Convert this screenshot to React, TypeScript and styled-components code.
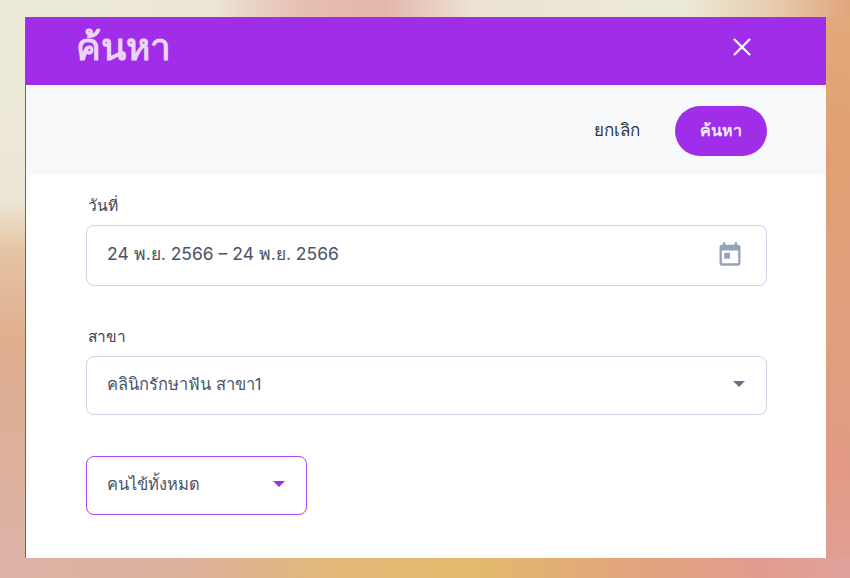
import React from "react";
import styled, { createGlobalStyle } from "styled-components";

const GlobalStyle = createGlobalStyle`
  html, body {
    margin: 0;
    padding: 0;
  }
  body {
    font-family: Inter, "Noto Sans", sans-serif;
    background-color: #e0a27c;
  }
`;

const Backdrop = styled.div`
  box-sizing: border-box;
  width: 850px;
  height: 578px;
  padding: 17px 24px 20px 25px;
  overflow: hidden;
  background-color: #e0a27c;
  background-repeat: no-repeat;
  background-image:
    linear-gradient(90deg, #edead9 0, #ece6d6 210px, #e6bfb2 300px, #e4b6ac 385px, #ebe2d2 470px, #edead9 680px, #e8cdae 770px, #e0a67c 850px),
    linear-gradient(90deg, #dcb3a5 0, #dbb09c 170px, #e2b878 340px, #e3ba6c 470px, #e1a47e 640px, #e29c8e 760px, #e0a29c 850px),
    linear-gradient(180deg, #edead9 0, #ece6d6 200px, #e6c4a4 250px, #dfae8e 340px, #dcb09c 470px, #dcb3a8 578px),
    linear-gradient(180deg, #e2aa7c 0, #e0a072 150px, #e0a07e 320px, #e29a84 470px, #e0a096 578px);
  background-size: 100% 17px, 100% 20px, 25px 100%, 24px 100%;
  background-position: 0 0, 0 100%, 0 0, 100% 0;
`;

const Modal = styled.section`
  display: flex;
  flex-direction: column;
  height: 541px;
  background: #ffffff;
  border-left: 1px solid #6b6a60;
`;

const Header = styled.header`
  display: flex;
  align-items: center;
  justify-content: space-between;
  height: 68px;
  padding: 0 74px 8px 50px;
  box-sizing: border-box;
  background: #a02ee9;
`;

const Title = styled.h1`
  margin: 0;
  font-size: 37px;
  line-height: 48px;
  font-weight: 600;
  color: #ecd5fb;
`;

const CloseButton = styled.button`
  display: flex;
  padding: 0;
  border: 0;
  background: none;
  color: #ffffff;
`;

const Toolbar = styled.div`
  display: flex;
  align-items: center;
  justify-content: flex-end;
  gap: 35px;
  height: 90px;
  padding: 2px 59px 0 0;
  box-sizing: border-box;
  background: #f8f9fb;
`;

const CancelButton = styled.button`
  padding: 0 0 2px;
  border: 0;
  background: none;
  font: 400 17px/20px Inter, "Noto Sans", sans-serif;
  color: #2d3748;
`;

const SearchButton = styled.button`
  width: 92px;
  height: 50px;
  padding: 0 0 2px;
  border: 0;
  border-radius: 25px;
  background: #a02ee9;
  font: 600 16px/20px Inter, "Noto Sans", sans-serif;
  color: #f6eafe;
`;

const Form = styled.div`
  display: flex;
  flex-direction: column;
  padding: 20px 59px 0 60px;
`;

const Field = styled.div<{ $gap: number }>`
  display: flex;
  flex-direction: column;
  gap: 8px;
  margin-bottom: ${(p) => p.$gap}px;
`;

const Label = styled.label`
  padding-left: 2px;
  font-size: 15.5px;
  line-height: 22px;
  color: #3c4657;
`;

const Control = styled.div<{ $accent?: boolean; $width?: number; $height: number }>`
  display: flex;
  align-items: center;
  justify-content: space-between;
  box-sizing: border-box;
  width: ${(p) => (p.$width ? `${p.$width}px` : "100%")};
  height: ${(p) => p.$height}px;
  padding: 0 20px 4px 20px;
  border: 1px solid ${(p) => (p.$accent ? "#ac45f0" : "#cbd5e5")};
  border-radius: 8px;
  background: #ffffff;
`;

const Value = styled.span<{ $size?: number }>`
  font-size: ${(p) => p.$size ?? 16.5}px;
  line-height: 22px;
  color: #4a5568;
`;

const Caret = styled.span<{ $color: string }>`
  width: 0;
  height: 0;
  margin-right: 1px;
  border-left: 6px solid transparent;
  border-right: 6px solid transparent;
  border-top: 6px solid ${(p) => p.$color};
`;

const CalendarIcon = () => (
  <svg width="28" height="28" viewBox="0 0 24 24" fill="#94a3b8" style={{ marginRight: 2 }}>
    <path d="M19 4h-1V2h-2v2H8V2H6v2H5a2 2 0 0 0-2 2v14a2 2 0 0 0 2 2h14a2 2 0 0 0 2-2V6a2 2 0 0 0-2-2zm0 16H5V9h14v11z" />
    <rect x="7" y="11" width="5" height="5" />
  </svg>
);

const CloseIcon = () => (
  <svg width="20" height="20" viewBox="0 0 20 20" fill="none" stroke="currentColor" strokeWidth="2.2">
    <path d="M2 2l16 16M18 2L2 18" />
  </svg>
);

export default function App() {
  return (
    <Backdrop>
      <GlobalStyle />
      <Modal>
        <Header>
          <Title>ค้นหา</Title>
          <CloseButton aria-label="close">
            <CloseIcon />
          </CloseButton>
        </Header>
        <Toolbar>
          <CancelButton>ยกเลิก</CancelButton>
          <SearchButton>ค้นหา</SearchButton>
        </Toolbar>
        <Form>
          <Field $gap={40}>
            <Label>วันที่</Label>
            <Control $height={61}>
              <Value $size={17.5}>24 พ.ย. 2566 – 24 พ.ย. 2566</Value>
              <CalendarIcon />
            </Control>
          </Field>
          <Field $gap={41}>
            <Label>สาขา</Label>
            <Control $height={59}>
              <Value>คลินิกรักษาฟัน สาขา1</Value>
              <Caret $color="#64748b" />
            </Control>
          </Field>
          <Control $accent $width={221} $height={59}>
            <Value>คนไข้ทั้งหมด</Value>
            <Caret $color="#a02ee9" />
          </Control>
        </Form>
      </Modal>
    </Backdrop>
  );
}
